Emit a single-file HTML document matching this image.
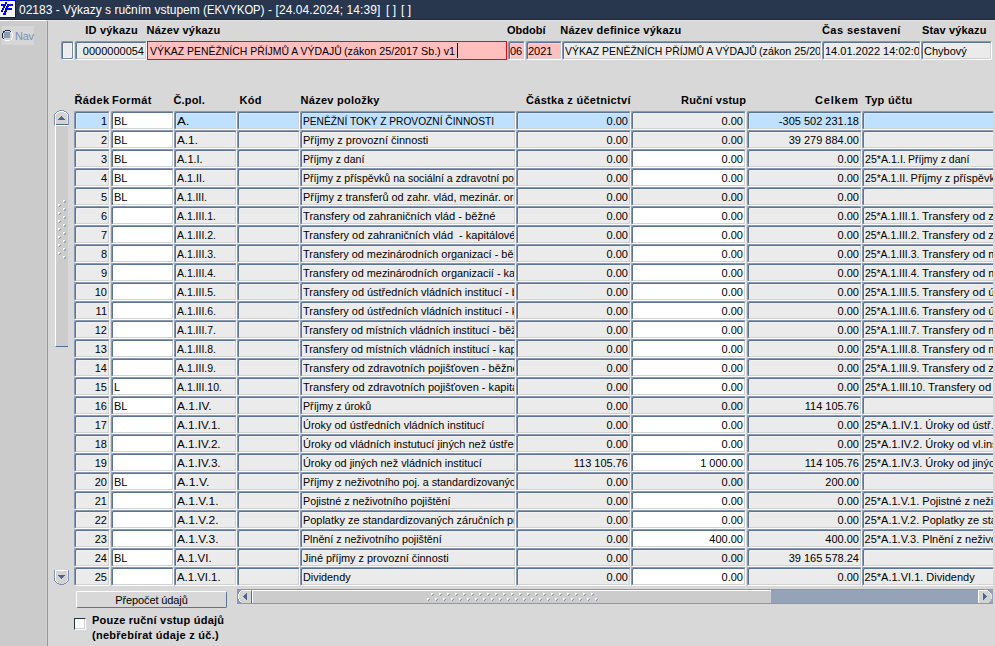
<!DOCTYPE html>
<html><head><meta charset="utf-8"><title>02183</title>
<style>
html,body{margin:0;padding:0}
body{width:995px;height:646px;overflow:hidden;position:relative;background:#d8d8d8;font-family:"Liberation Sans",sans-serif;font-size:11px;color:#000}
div,span{position:absolute;box-sizing:border-box;white-space:nowrap}
#tb{left:0;top:0;width:995px;height:20px;background:#29374e;border-bottom:1px solid #1e2a3c}
#tt,.tt{left:19px;top:3px;font-size:12px;line-height:14px;color:#fff;white-space:pre}
#ic{left:0;top:0;width:16px;height:18px;background:#fbfbf4;border:1px solid #0000ff;border-left:0}
#lp{left:0;top:20px;width:46px;height:626px;background:#cbcbcb;border-top:1px solid #fff}
#lv{left:46px;top:21px;width:2px;height:625px;background:#8597b4;border-left:1px solid #d2d2d2}
#hl{left:47px;top:20px;width:948px;height:1px;background:#e4e4e4}
#nv{left:2px;top:26px;width:32px;height:19px;background:#d6d6d6}
#nt{left:15px;top:30px;font-size:11px;line-height:13px;color:#7890b6;letter-spacing:-.3px}
.h{font-weight:bold;line-height:13px;top:24px}
.g{font-weight:bold;line-height:13px;top:94px}
.c{height:19px;border-top:1px solid #8798b4;border-left:1px solid #8798b4;border-bottom:1px solid #fff;border-right:1px solid #fff;border-radius:2px;background:#ebebeb;box-shadow:inset 1px 1px 0 #5a7396,inset -1px -1px 0 #d2d2d2,inset 2px 2px 0 rgba(255,255,255,.3);line-height:16px;padding:1px 2px 0 2px;overflow:hidden;white-space:pre}
.c span{top:1px;left:2px;line-height:16px;white-space:pre}
.k{transform-origin:0 0}
.c::after{content:"";position:absolute;right:0;top:1px;bottom:0;width:1px;background:#d2d2d2}
.r{text-align:right}
.w{background:#fff}
.b{background:#bfe0ff}
.p{background:#ffbfbf}
</style></head><body>
<div id="tb"></div>
<div id="tt">02183 - Výkazy s ručním vstupem (</div>
<div class="tt k" style="left:207px;transform:scaleX(.934)">EKVYKOP</div>
<div class="tt" style="left:260.5px;letter-spacing:.08px">) - [24.04.2024; 14:39]</div>
<div class="tt" style="left:386px">[ ]</div>
<div class="tt" style="left:401px">[ ]</div>
<div id="lp"></div><div id="lv"></div><div id="hl"></div>
<div id="nv"></div><div id="nt">Nav</div>
<span class="h" style="left:85.3px;letter-spacing:.2px">ID výkazu</span>
<span class="h" style="left:146.5px;letter-spacing:.2px">Název výkazu</span>
<span class="h" style="left:507px">Období</span>
<span class="h" style="left:560.3px;letter-spacing:.24px">Název definice výkazu</span>
<span class="h" style="left:822px;letter-spacing:.42px">Čas sestavení</span>
<span class="h" style="left:922px;letter-spacing:.15px">Stav výkazu</span>
<div style="left:61px;top:41px;width:13px;height:19px;border-radius:2px;background:#ebebeb;border-top:1px solid #8798b4;border-left:1px solid #8798b4;border-right:1px solid #fff;border-bottom:1px solid #fff;box-shadow:inset 1px 1px 0 #5a7396,inset -1px -1px 0 #7189ab,inset 2px 2px 0 rgba(255,255,255,.4),inset -2px -2px 0 rgba(255,255,255,.4)"></div>
<div class="c r" style="left:75px;top:41px;width:72px">0000000054</div>
<div id="rf" style="left:147px;top:41px;width:360px;height:19px;border:1px solid #f00;background:#ffbfbf;line-height:17px;"><span class="k" style="left:2px;top:1px;line-height:16px;transform:scaleX(.9475)">VÝKAZ PENĚŽNÍCH PŘÍJMŮ A VÝDAJŮ</span><span class="k" style="left:196px;top:1px;line-height:16px;transform:scaleX(.976)">(zákon 25/2017 Sb.) v1</span></div>
<div id="ct" style="left:457px;top:43px;width:1px;height:15px;background:#000"></div>
<div class="c p" style="left:508px;top:41px;width:17px;padding-left:1px">06</div>
<div class="c p" style="left:526px;top:41px;width:36px;padding-left:1px">2021</div>
<div class="c" style="left:562px;top:41px;width:260px"><span class="k" style="transform:scaleX(.9475)">VÝKAZ PENĚŽNÍCH PŘÍJMŮ A VÝDAJŮ</span><span class="k" style="left:196px;transform:scaleX(.976)">(zákon 25/2017 Sb.) v1</span></div>
<div class="c" style="left:822px;top:41px;width:99px">14.01.2022 14:02:01</div>
<div class="c" style="left:921px;top:41px;width:71px">Chybový</div>
<span class="g" style="left:74.5px;letter-spacing:.4px">Řádek</span>
<span class="g" style="left:112px;letter-spacing:.43px">Formát</span>
<span class="g" style="left:173.5px;letter-spacing:.17px">Č.pol.</span>
<span class="g" style="left:239.5px;letter-spacing:.33px">Kód</span>
<span class="g" style="left:300.6px;letter-spacing:.25px">Název položky</span>
<span class="g" style="left:526px;letter-spacing:.3px">Částka z účetnictví</span>
<span class="g" style="left:681px;letter-spacing:.2px">Ruční vstup</span>
<span class="g" style="left:815px;letter-spacing:.8px">Celkem</span>
<span class="g" style="left:865px;letter-spacing:.3px">Typ účtu</span>
<div id="tbl" style="left:0;top:0;width:993px;height:646px;overflow:hidden">
<div class="c r b" style="left:74px;top:111px;width:36px">1</div>
<div class="c w" style="left:111px;top:111px;width:63px">BL</div>
<div class="c b" style="left:174px;top:111px;width:63px"><span class="k" style="transform:scaleX(1.2)">A.</span></div>
<div class="c b" style="left:237px;top:111px;width:63px"></div>
<div class="c b" style="left:300px;top:111px;width:216px"><span class="k" style="transform:scaleX(0.928)">PENĚŽNÍ TOKY Z PROVOZNÍ ČINNOSTI</span></div>
<div class="c r b" style="left:516px;top:111px;width:115px">0.00</div>
<div class="c r" style="left:631px;top:111px;width:115px">0.00</div>
<div class="c r b" style="left:747px;top:111px;width:115px">-305 502 231.18</div>
<div class="c b" style="left:862px;top:111px;width:140px"></div>
<div class="c r" style="left:74px;top:130px;width:36px">2</div>
<div class="c w" style="left:111px;top:130px;width:63px">BL</div>
<div class="c" style="left:174px;top:130px;width:63px"><span class="k" style="transform:scaleX(1.07)">A.1.</span></div>
<div class="c" style="left:237px;top:130px;width:63px"></div>
<div class="c" style="left:300px;top:130px;width:216px"><span class="k">Příjmy z provozní činnosti</span></div>
<div class="c r" style="left:516px;top:130px;width:115px">0.00</div>
<div class="c r" style="left:631px;top:130px;width:115px">0.00</div>
<div class="c r" style="left:747px;top:130px;width:115px">39 279 884.00</div>
<div class="c" style="left:862px;top:130px;width:140px"></div>
<div class="c r" style="left:74px;top:149px;width:36px">3</div>
<div class="c w" style="left:111px;top:149px;width:63px">BL</div>
<div class="c" style="left:174px;top:149px;width:63px"><span class="k">A.1.I.</span></div>
<div class="c" style="left:237px;top:149px;width:63px"></div>
<div class="c" style="left:300px;top:149px;width:216px"><span class="k" style="transform:scaleX(0.955)">Příjmy z daní</span></div>
<div class="c r" style="left:516px;top:149px;width:115px">0.00</div>
<div class="c r w" style="left:631px;top:149px;width:115px">0.00</div>
<div class="c r" style="left:747px;top:149px;width:115px">0.00</div>
<div class="c" style="left:862px;top:149px;width:140px"><span class="k" style="transform:scaleX(0.967);left:1.60px">25*A.1.I. </span><span class="k" style="transform:scaleX(0.955);left:45.37px">Příjmy z daní</span></div>
<div class="c r" style="left:74px;top:168px;width:36px">4</div>
<div class="c w" style="left:111px;top:168px;width:63px">BL</div>
<div class="c" style="left:174px;top:168px;width:63px"><span class="k" style="transform:scaleX(0.974)">A.1.II.</span></div>
<div class="c" style="left:237px;top:168px;width:63px"></div>
<div class="c" style="left:300px;top:168px;width:216px"><span class="k" style="transform:scaleX(0.964)">Příjmy z příspěvků na sociální a zdravotní pojištění</span></div>
<div class="c r" style="left:516px;top:168px;width:115px">0.00</div>
<div class="c r w" style="left:631px;top:168px;width:115px">0.00</div>
<div class="c r" style="left:747px;top:168px;width:115px">0.00</div>
<div class="c" style="left:862px;top:168px;width:140px"><span class="k" style="transform:scaleX(0.951);left:1.60px">25*A.1.II. </span><span class="k" style="left:47.55px">Příjmy z příspěvků na sociální</span></div>
<div class="c r" style="left:74px;top:187px;width:36px">5</div>
<div class="c w" style="left:111px;top:187px;width:63px">BL</div>
<div class="c" style="left:174px;top:187px;width:63px"><span class="k" style="transform:scaleX(0.943)">A.1.III.</span></div>
<div class="c" style="left:237px;top:187px;width:63px"></div>
<div class="c" style="left:300px;top:187px;width:216px"><span class="k" style="transform:scaleX(0.992)">Příjmy z transferů od zahr. vlád, mezinár. organizací</span></div>
<div class="c r" style="left:516px;top:187px;width:115px">0.00</div>
<div class="c r" style="left:631px;top:187px;width:115px">0.00</div>
<div class="c r" style="left:747px;top:187px;width:115px">0.00</div>
<div class="c" style="left:862px;top:187px;width:140px"></div>
<div class="c r" style="left:74px;top:206px;width:36px">6</div>
<div class="c w" style="left:111px;top:206px;width:63px"></div>
<div class="c" style="left:174px;top:206px;width:63px"><span class="k" style="transform:scaleX(0.951)">A.1.III.1.</span></div>
<div class="c" style="left:237px;top:206px;width:63px"></div>
<div class="c" style="left:300px;top:206px;width:216px"><span class="k" style="transform:scaleX(1.014)">Transfery od zahraničních vlád - běžné</span></div>
<div class="c r" style="left:516px;top:206px;width:115px">0.00</div>
<div class="c r w" style="left:631px;top:206px;width:115px">0.00</div>
<div class="c r" style="left:747px;top:206px;width:115px">0.00</div>
<div class="c" style="left:862px;top:206px;width:140px"><span class="k" style="transform:scaleX(0.945);left:1.60px">25*A.1.III.1. </span><span class="k" style="transform:scaleX(1.03);left:58.82px">Transfery od zahr.</span></div>
<div class="c r" style="left:74px;top:225px;width:36px">7</div>
<div class="c w" style="left:111px;top:225px;width:63px"></div>
<div class="c" style="left:174px;top:225px;width:63px"><span class="k" style="transform:scaleX(0.951)">A.1.III.2.</span></div>
<div class="c" style="left:237px;top:225px;width:63px"></div>
<div class="c" style="left:300px;top:225px;width:216px"><span class="k">Transfery od zahraničních vlád  - kapitálové</span></div>
<div class="c r" style="left:516px;top:225px;width:115px">0.00</div>
<div class="c r w" style="left:631px;top:225px;width:115px">0.00</div>
<div class="c r" style="left:747px;top:225px;width:115px">0.00</div>
<div class="c" style="left:862px;top:225px;width:140px"><span class="k" style="transform:scaleX(0.945);left:1.60px">25*A.1.III.2. </span><span class="k" style="transform:scaleX(1.03);left:58.82px">Transfery od zahr.</span></div>
<div class="c r" style="left:74px;top:244px;width:36px">8</div>
<div class="c w" style="left:111px;top:244px;width:63px"></div>
<div class="c" style="left:174px;top:244px;width:63px"><span class="k" style="transform:scaleX(0.951)">A.1.III.3.</span></div>
<div class="c" style="left:237px;top:244px;width:63px"></div>
<div class="c" style="left:300px;top:244px;width:216px"><span class="k" style="transform:scaleX(0.991)">Transfery od mezinárodních organizací - běžné</span></div>
<div class="c r" style="left:516px;top:244px;width:115px">0.00</div>
<div class="c r w" style="left:631px;top:244px;width:115px">0.00</div>
<div class="c r" style="left:747px;top:244px;width:115px">0.00</div>
<div class="c" style="left:862px;top:244px;width:140px"><span class="k" style="transform:scaleX(0.945);left:1.60px">25*A.1.III.3. </span><span class="k" style="transform:scaleX(1.03);left:58.82px">Transfery od mez.</span></div>
<div class="c r" style="left:74px;top:263px;width:36px">9</div>
<div class="c w" style="left:111px;top:263px;width:63px"></div>
<div class="c" style="left:174px;top:263px;width:63px"><span class="k" style="transform:scaleX(0.951)">A.1.III.4.</span></div>
<div class="c" style="left:237px;top:263px;width:63px"></div>
<div class="c" style="left:300px;top:263px;width:216px"><span class="k" style="transform:scaleX(0.99)">Transfery od mezinárodních organizacií - kapitálové</span></div>
<div class="c r" style="left:516px;top:263px;width:115px">0.00</div>
<div class="c r w" style="left:631px;top:263px;width:115px">0.00</div>
<div class="c r" style="left:747px;top:263px;width:115px">0.00</div>
<div class="c" style="left:862px;top:263px;width:140px"><span class="k" style="transform:scaleX(0.945);left:1.60px">25*A.1.III.4. </span><span class="k" style="transform:scaleX(1.03);left:58.82px">Transfery od mez.</span></div>
<div class="c r" style="left:74px;top:282px;width:36px">10</div>
<div class="c w" style="left:111px;top:282px;width:63px"></div>
<div class="c" style="left:174px;top:282px;width:63px"><span class="k" style="transform:scaleX(0.951)">A.1.III.5.</span></div>
<div class="c" style="left:237px;top:282px;width:63px"></div>
<div class="c" style="left:300px;top:282px;width:216px"><span class="k" style="transform:scaleX(0.994)">Transfery od ústředních vládních institucí - běžné</span></div>
<div class="c r" style="left:516px;top:282px;width:115px">0.00</div>
<div class="c r w" style="left:631px;top:282px;width:115px">0.00</div>
<div class="c r" style="left:747px;top:282px;width:115px">0.00</div>
<div class="c" style="left:862px;top:282px;width:140px"><span class="k" style="transform:scaleX(0.945);left:1.60px">25*A.1.III.5. </span><span class="k" style="transform:scaleX(1.03);left:58.82px">Transfery od ústř.</span></div>
<div class="c r" style="left:74px;top:301px;width:36px">11</div>
<div class="c w" style="left:111px;top:301px;width:63px"></div>
<div class="c" style="left:174px;top:301px;width:63px"><span class="k" style="transform:scaleX(0.951)">A.1.III.6.</span></div>
<div class="c" style="left:237px;top:301px;width:63px"></div>
<div class="c" style="left:300px;top:301px;width:216px"><span class="k" style="transform:scaleX(0.994)">Transfery od ústředních vládních institucí - kapitálové</span></div>
<div class="c r" style="left:516px;top:301px;width:115px">0.00</div>
<div class="c r w" style="left:631px;top:301px;width:115px">0.00</div>
<div class="c r" style="left:747px;top:301px;width:115px">0.00</div>
<div class="c" style="left:862px;top:301px;width:140px"><span class="k" style="transform:scaleX(0.945);left:1.60px">25*A.1.III.6. </span><span class="k" style="transform:scaleX(1.03);left:58.82px">Transfery od ústř.</span></div>
<div class="c r" style="left:74px;top:320px;width:36px">12</div>
<div class="c w" style="left:111px;top:320px;width:63px"></div>
<div class="c" style="left:174px;top:320px;width:63px"><span class="k" style="transform:scaleX(0.951)">A.1.III.7.</span></div>
<div class="c" style="left:237px;top:320px;width:63px"></div>
<div class="c" style="left:300px;top:320px;width:216px"><span class="k" style="transform:scaleX(0.98)">Transfery od místních vládních institucí - běžné</span></div>
<div class="c r" style="left:516px;top:320px;width:115px">0.00</div>
<div class="c r w" style="left:631px;top:320px;width:115px">0.00</div>
<div class="c r" style="left:747px;top:320px;width:115px">0.00</div>
<div class="c" style="left:862px;top:320px;width:140px"><span class="k" style="transform:scaleX(0.945);left:1.60px">25*A.1.III.7. </span><span class="k" style="transform:scaleX(1.03);left:58.82px">Transfery od míst.</span></div>
<div class="c r" style="left:74px;top:339px;width:36px">13</div>
<div class="c w" style="left:111px;top:339px;width:63px"></div>
<div class="c" style="left:174px;top:339px;width:63px"><span class="k" style="transform:scaleX(0.951)">A.1.III.8.</span></div>
<div class="c" style="left:237px;top:339px;width:63px"></div>
<div class="c" style="left:300px;top:339px;width:216px"><span class="k" style="transform:scaleX(0.98)">Transfery od místních vládních institucí - kapitálové</span></div>
<div class="c r" style="left:516px;top:339px;width:115px">0.00</div>
<div class="c r w" style="left:631px;top:339px;width:115px">0.00</div>
<div class="c r" style="left:747px;top:339px;width:115px">0.00</div>
<div class="c" style="left:862px;top:339px;width:140px"><span class="k" style="transform:scaleX(0.945);left:1.60px">25*A.1.III.8. </span><span class="k" style="transform:scaleX(1.03);left:58.82px">Transfery od míst.</span></div>
<div class="c r" style="left:74px;top:358px;width:36px">14</div>
<div class="c w" style="left:111px;top:358px;width:63px"></div>
<div class="c" style="left:174px;top:358px;width:63px"><span class="k" style="transform:scaleX(0.951)">A.1.III.9.</span></div>
<div class="c" style="left:237px;top:358px;width:63px"></div>
<div class="c" style="left:300px;top:358px;width:216px"><span class="k" style="transform:scaleX(1.005)">Transfery od zdravotních pojišťoven - běžné</span></div>
<div class="c r" style="left:516px;top:358px;width:115px">0.00</div>
<div class="c r w" style="left:631px;top:358px;width:115px">0.00</div>
<div class="c r" style="left:747px;top:358px;width:115px">0.00</div>
<div class="c" style="left:862px;top:358px;width:140px"><span class="k" style="transform:scaleX(0.945);left:1.60px">25*A.1.III.9. </span><span class="k" style="transform:scaleX(1.03);left:58.82px">Transfery od zdr.</span></div>
<div class="c r" style="left:74px;top:377px;width:36px">15</div>
<div class="c w" style="left:111px;top:377px;width:63px">L</div>
<div class="c" style="left:174px;top:377px;width:63px"><span class="k" style="transform:scaleX(0.953)">A.1.III.10.</span></div>
<div class="c" style="left:237px;top:377px;width:63px"></div>
<div class="c" style="left:300px;top:377px;width:216px"><span class="k" style="transform:scaleX(1.005)">Transfery od zdravotních pojišťoven - kapitálové</span></div>
<div class="c r" style="left:516px;top:377px;width:115px">0.00</div>
<div class="c r w" style="left:631px;top:377px;width:115px">0.00</div>
<div class="c r" style="left:747px;top:377px;width:115px">0.00</div>
<div class="c" style="left:862px;top:377px;width:140px"><span class="k" style="transform:scaleX(0.948);left:1.60px">25*A.1.III.10. </span><span class="k" style="transform:scaleX(1.03);left:64.79px">Transfery od zdr.</span></div>
<div class="c r" style="left:74px;top:396px;width:36px">16</div>
<div class="c w" style="left:111px;top:396px;width:63px">BL</div>
<div class="c" style="left:174px;top:396px;width:63px"><span class="k" style="transform:scaleX(1.083)">A.1.IV.</span></div>
<div class="c" style="left:237px;top:396px;width:63px"></div>
<div class="c" style="left:300px;top:396px;width:216px"><span class="k" style="transform:scaleX(0.969)">Příjmy z úroků</span></div>
<div class="c r" style="left:516px;top:396px;width:115px">0.00</div>
<div class="c r" style="left:631px;top:396px;width:115px">0.00</div>
<div class="c r" style="left:747px;top:396px;width:115px">114 105.76</div>
<div class="c" style="left:862px;top:396px;width:140px"></div>
<div class="c r" style="left:74px;top:415px;width:36px">17</div>
<div class="c w" style="left:111px;top:415px;width:63px"></div>
<div class="c" style="left:174px;top:415px;width:63px"><span class="k" style="transform:scaleX(1.059)">A.1.IV.1.</span></div>
<div class="c" style="left:237px;top:415px;width:63px"></div>
<div class="c" style="left:300px;top:415px;width:216px"><span class="k" style="transform:scaleX(0.992)">Úroky od ústředních vládních institucí</span></div>
<div class="c r" style="left:516px;top:415px;width:115px">0.00</div>
<div class="c r w" style="left:631px;top:415px;width:115px">0.00</div>
<div class="c r" style="left:747px;top:415px;width:115px">0.00</div>
<div class="c" style="left:862px;top:415px;width:140px"><span class="k" style="left:1.60px">25*A.1.IV.1. </span><span class="k" style="left:62.37px">Úroky od ústř.vl.</span></div>
<div class="c r" style="left:74px;top:434px;width:36px">18</div>
<div class="c w" style="left:111px;top:434px;width:63px"></div>
<div class="c" style="left:174px;top:434px;width:63px"><span class="k" style="transform:scaleX(1.059)">A.1.IV.2.</span></div>
<div class="c" style="left:237px;top:434px;width:63px"></div>
<div class="c" style="left:300px;top:434px;width:216px"><span class="k" style="transform:scaleX(0.995)">Úroky od vládních instutucí jiných než ústředních</span></div>
<div class="c r" style="left:516px;top:434px;width:115px">0.00</div>
<div class="c r w" style="left:631px;top:434px;width:115px">0.00</div>
<div class="c r" style="left:747px;top:434px;width:115px">0.00</div>
<div class="c" style="left:862px;top:434px;width:140px"><span class="k" style="left:1.60px">25*A.1.IV.2. </span><span class="k" style="left:62.37px">Úroky od vl.inst.</span></div>
<div class="c r" style="left:74px;top:453px;width:36px">19</div>
<div class="c w" style="left:111px;top:453px;width:63px"></div>
<div class="c" style="left:174px;top:453px;width:63px"><span class="k" style="transform:scaleX(1.059)">A.1.IV.3.</span></div>
<div class="c" style="left:237px;top:453px;width:63px"></div>
<div class="c" style="left:300px;top:453px;width:216px"><span class="k" style="transform:scaleX(0.991)">Úroky od jiných než vládních institucí</span></div>
<div class="c r" style="left:516px;top:453px;width:115px">113 105.76</div>
<div class="c r w" style="left:631px;top:453px;width:115px">1 000.00</div>
<div class="c r" style="left:747px;top:453px;width:115px">114 105.76</div>
<div class="c" style="left:862px;top:453px;width:140px"><span class="k" style="left:1.60px">25*A.1.IV.3. </span><span class="k" style="left:62.37px">Úroky od jiných</span></div>
<div class="c r" style="left:74px;top:472px;width:36px">20</div>
<div class="c w" style="left:111px;top:472px;width:63px">BL</div>
<div class="c" style="left:174px;top:472px;width:63px"><span class="k" style="transform:scaleX(1.119)">A.1.V.</span></div>
<div class="c" style="left:237px;top:472px;width:63px"></div>
<div class="c" style="left:300px;top:472px;width:216px"><span class="k" style="transform:scaleX(0.975)">Příjmy z neživotního poj. a standardizovaných</span></div>
<div class="c r" style="left:516px;top:472px;width:115px">0.00</div>
<div class="c r" style="left:631px;top:472px;width:115px">0.00</div>
<div class="c r" style="left:747px;top:472px;width:115px">200.00</div>
<div class="c" style="left:862px;top:472px;width:140px"></div>
<div class="c r" style="left:74px;top:491px;width:36px">21</div>
<div class="c w" style="left:111px;top:491px;width:63px"></div>
<div class="c" style="left:174px;top:491px;width:63px"><span class="k" style="transform:scaleX(1.089)">A.1.V.1.</span></div>
<div class="c" style="left:237px;top:491px;width:63px"></div>
<div class="c" style="left:300px;top:491px;width:216px"><span class="k" style="transform:scaleX(0.976)">Pojistné z neživotního pojištění</span></div>
<div class="c r" style="left:516px;top:491px;width:115px">0.00</div>
<div class="c r w" style="left:631px;top:491px;width:115px">0.00</div>
<div class="c r" style="left:747px;top:491px;width:115px">0.00</div>
<div class="c" style="left:862px;top:491px;width:140px"><span class="k" style="left:1.60px">25*A.1.V.1. </span><span class="k" style="left:59.30px">Pojistné z neživotního</span></div>
<div class="c r" style="left:74px;top:510px;width:36px">22</div>
<div class="c w" style="left:111px;top:510px;width:63px"></div>
<div class="c" style="left:174px;top:510px;width:63px"><span class="k" style="transform:scaleX(1.089)">A.1.V.2.</span></div>
<div class="c" style="left:237px;top:510px;width:63px"></div>
<div class="c" style="left:300px;top:510px;width:216px"><span class="k" style="transform:scaleX(0.993)">Poplatky ze standardizovaných záručních programů</span></div>
<div class="c r" style="left:516px;top:510px;width:115px">0.00</div>
<div class="c r w" style="left:631px;top:510px;width:115px">0.00</div>
<div class="c r" style="left:747px;top:510px;width:115px">0.00</div>
<div class="c" style="left:862px;top:510px;width:140px"><span class="k" style="left:1.60px">25*A.1.V.2. </span><span class="k" style="left:59.30px">Poplatky ze stand.</span></div>
<div class="c r" style="left:74px;top:529px;width:36px">23</div>
<div class="c w" style="left:111px;top:529px;width:63px"></div>
<div class="c" style="left:174px;top:529px;width:63px"><span class="k" style="transform:scaleX(1.089)">A.1.V.3.</span></div>
<div class="c" style="left:237px;top:529px;width:63px"></div>
<div class="c" style="left:300px;top:529px;width:216px"><span class="k" style="transform:scaleX(0.969)">Plnění z neživotního pojištění</span></div>
<div class="c r" style="left:516px;top:529px;width:115px">0.00</div>
<div class="c r w" style="left:631px;top:529px;width:115px">400.00</div>
<div class="c r" style="left:747px;top:529px;width:115px">400.00</div>
<div class="c" style="left:862px;top:529px;width:140px"><span class="k" style="left:1.60px">25*A.1.V.3. </span><span class="k" style="left:59.30px">Plnění z neživotního</span></div>
<div class="c r" style="left:74px;top:548px;width:36px">24</div>
<div class="c w" style="left:111px;top:548px;width:63px">BL</div>
<div class="c" style="left:174px;top:548px;width:63px"><span class="k" style="transform:scaleX(1.048)">A.1.VI.</span></div>
<div class="c" style="left:237px;top:548px;width:63px"></div>
<div class="c" style="left:300px;top:548px;width:216px"><span class="k" style="transform:scaleX(0.988)">Jiné příjmy z provozní činnosti</span></div>
<div class="c r" style="left:516px;top:548px;width:115px">0.00</div>
<div class="c r" style="left:631px;top:548px;width:115px">0.00</div>
<div class="c r" style="left:747px;top:548px;width:115px">39 165 578.24</div>
<div class="c" style="left:862px;top:548px;width:140px"></div>
<div class="c r" style="left:74px;top:567px;width:36px">25</div>
<div class="c w" style="left:111px;top:567px;width:63px"></div>
<div class="c" style="left:174px;top:567px;width:63px"><span class="k" style="transform:scaleX(1.033)">A.1.VI.1.</span></div>
<div class="c" style="left:237px;top:567px;width:63px"></div>
<div class="c" style="left:300px;top:567px;width:216px"><span class="k" style="transform:scaleX(0.985)">Dividendy</span></div>
<div class="c r" style="left:516px;top:567px;width:115px">0.00</div>
<div class="c r w" style="left:631px;top:567px;width:115px">0.00</div>
<div class="c r" style="left:747px;top:567px;width:115px">0.00</div>
<div class="c" style="left:862px;top:567px;width:140px"><span class="k" style="left:1.60px">25*A.1.VI.1. </span><span class="k" style="left:63.37px">Dividendy</span></div><svg style="position:absolute;left:54px;top:110px" width="15" height="15" shape-rendering="crispEdges"><rect x="5" y="0" width="5" height="1" fill="#7d92b4"/><rect x="3" y="1" width="2" height="1" fill="#7d92b4"/><rect x="5" y="1" width="5" height="1" fill="#ffffff"/><rect x="10" y="1" width="2" height="1" fill="#7d92b4"/><rect x="2" y="2" width="1" height="1" fill="#7d92b4"/><rect x="3" y="2" width="2" height="1" fill="#ffffff"/><rect x="5" y="2" width="5" height="1" fill="#d3d3d3"/><rect x="10" y="2" width="2" height="1" fill="#ffffff"/><rect x="12" y="2" width="1" height="1" fill="#7d92b4"/><rect x="1" y="3" width="1" height="1" fill="#7d92b4"/><rect x="2" y="3" width="1" height="1" fill="#ffffff"/><rect x="3" y="3" width="9" height="1" fill="#d3d3d3"/><rect x="12" y="3" width="1" height="1" fill="#ffffff"/><rect x="13" y="3" width="1" height="1" fill="#7d92b4"/><rect x="0" y="4" width="1" height="1" fill="#7d92b4"/><rect x="1" y="4" width="1" height="1" fill="#ffffff"/><rect x="2" y="4" width="11" height="1" fill="#d3d3d3"/><rect x="13" y="4" width="1" height="1" fill="#ffffff"/><rect x="14" y="4" width="1" height="1" fill="#7d92b4"/><rect x="0" y="5" width="1" height="1" fill="#7d92b4"/><rect x="1" y="5" width="1" height="1" fill="#ffffff"/><rect x="2" y="5" width="11" height="1" fill="#d3d3d3"/><rect x="13" y="5" width="1" height="1" fill="#e6e6e6"/><rect x="14" y="5" width="1" height="1" fill="#7d92b4"/><rect x="0" y="6" width="1" height="1" fill="#7d92b4"/><rect x="1" y="6" width="1" height="1" fill="#ffffff"/><rect x="2" y="6" width="5" height="1" fill="#d3d3d3"/><rect x="7" y="6" width="1" height="1" fill="#4a6590"/><rect x="8" y="6" width="5" height="1" fill="#d3d3d3"/><rect x="13" y="6" width="1" height="1" fill="#e6e6e6"/><rect x="14" y="6" width="1" height="1" fill="#7d92b4"/><rect x="0" y="7" width="1" height="1" fill="#7d92b4"/><rect x="1" y="7" width="1" height="1" fill="#ffffff"/><rect x="2" y="7" width="4" height="1" fill="#d3d3d3"/><rect x="6" y="7" width="3" height="1" fill="#4a6590"/><rect x="9" y="7" width="4" height="1" fill="#d3d3d3"/><rect x="13" y="7" width="1" height="1" fill="#e6e6e6"/><rect x="14" y="7" width="1" height="1" fill="#7d92b4"/><rect x="0" y="8" width="1" height="1" fill="#7d92b4"/><rect x="1" y="8" width="1" height="1" fill="#ffffff"/><rect x="2" y="8" width="3" height="1" fill="#d3d3d3"/><rect x="5" y="8" width="5" height="1" fill="#4a6590"/><rect x="10" y="8" width="3" height="1" fill="#d3d3d3"/><rect x="13" y="8" width="1" height="1" fill="#e6e6e6"/><rect x="14" y="8" width="1" height="1" fill="#7d92b4"/><rect x="0" y="9" width="1" height="1" fill="#7d92b4"/><rect x="1" y="9" width="1" height="1" fill="#ffffff"/><rect x="2" y="9" width="2" height="1" fill="#d3d3d3"/><rect x="4" y="9" width="7" height="1" fill="#4a6590"/><rect x="11" y="9" width="2" height="1" fill="#d3d3d3"/><rect x="13" y="9" width="1" height="1" fill="#e6e6e6"/><rect x="14" y="9" width="1" height="1" fill="#7d92b4"/><rect x="0" y="10" width="1" height="1" fill="#7d92b4"/><rect x="1" y="10" width="1" height="1" fill="#ffffff"/><rect x="2" y="10" width="11" height="1" fill="#d3d3d3"/><rect x="13" y="10" width="1" height="1" fill="#e6e6e6"/><rect x="14" y="10" width="1" height="1" fill="#7d92b4"/><rect x="0" y="11" width="1" height="1" fill="#7d92b4"/><rect x="1" y="11" width="1" height="1" fill="#ffffff"/><rect x="2" y="11" width="11" height="1" fill="#d3d3d3"/><rect x="13" y="11" width="1" height="1" fill="#e6e6e6"/><rect x="14" y="11" width="1" height="1" fill="#7d92b4"/><rect x="0" y="12" width="1" height="1" fill="#7d92b4"/><rect x="1" y="12" width="1" height="1" fill="#ffffff"/><rect x="2" y="12" width="11" height="1" fill="#d3d3d3"/><rect x="13" y="12" width="1" height="1" fill="#e6e6e6"/><rect x="14" y="12" width="1" height="1" fill="#7d92b4"/><rect x="0" y="13" width="1" height="1" fill="#7d92b4"/><rect x="1" y="13" width="1" height="1" fill="#ffffff"/><rect x="2" y="13" width="11" height="1" fill="#d3d3d3"/><rect x="13" y="13" width="1" height="1" fill="#e6e6e6"/><rect x="14" y="13" width="1" height="1" fill="#7d92b4"/><rect x="0" y="14" width="1" height="1" fill="#7d92b4"/><rect x="1" y="14" width="1" height="1" fill="#ffffff"/><rect x="2" y="14" width="12" height="1" fill="#4f6b94"/><rect x="14" y="14" width="1" height="1" fill="#7d92b4"/></svg>
<div style="left:55px;top:125px;width:13px;height:222px;background:#cccccc;border-left:1px solid #fff;border-top:1px solid #fff;border-bottom:1px solid #4f6b94"></div>
<svg style="position:absolute;left:0;top:0" width="80" height="400" shape-rendering="crispEdges"><rect x="63" y="200" width="2" height="2" fill="#fff"/><rect x="64" y="201" width="1" height="1" fill="#b9c4d6"/><rect x="65" y="201" width="1" height="1" fill="#7f95b6"/><rect x="64" y="202" width="1" height="1" fill="#7f95b6"/><rect x="63" y="208" width="2" height="2" fill="#fff"/><rect x="64" y="209" width="1" height="1" fill="#b9c4d6"/><rect x="65" y="209" width="1" height="1" fill="#7f95b6"/><rect x="64" y="210" width="1" height="1" fill="#7f95b6"/><rect x="63" y="216" width="2" height="2" fill="#fff"/><rect x="64" y="217" width="1" height="1" fill="#b9c4d6"/><rect x="65" y="217" width="1" height="1" fill="#7f95b6"/><rect x="64" y="218" width="1" height="1" fill="#7f95b6"/><rect x="63" y="224" width="2" height="2" fill="#fff"/><rect x="64" y="225" width="1" height="1" fill="#b9c4d6"/><rect x="65" y="225" width="1" height="1" fill="#7f95b6"/><rect x="64" y="226" width="1" height="1" fill="#7f95b6"/><rect x="63" y="232" width="2" height="2" fill="#fff"/><rect x="64" y="233" width="1" height="1" fill="#b9c4d6"/><rect x="65" y="233" width="1" height="1" fill="#7f95b6"/><rect x="64" y="234" width="1" height="1" fill="#7f95b6"/><rect x="63" y="240" width="2" height="2" fill="#fff"/><rect x="64" y="241" width="1" height="1" fill="#b9c4d6"/><rect x="65" y="241" width="1" height="1" fill="#7f95b6"/><rect x="64" y="242" width="1" height="1" fill="#7f95b6"/><rect x="63" y="248" width="2" height="2" fill="#fff"/><rect x="64" y="249" width="1" height="1" fill="#b9c4d6"/><rect x="65" y="249" width="1" height="1" fill="#7f95b6"/><rect x="64" y="250" width="1" height="1" fill="#7f95b6"/><rect x="63" y="256" width="2" height="2" fill="#fff"/><rect x="64" y="257" width="1" height="1" fill="#b9c4d6"/><rect x="65" y="257" width="1" height="1" fill="#7f95b6"/><rect x="64" y="258" width="1" height="1" fill="#7f95b6"/><rect x="58" y="204" width="2" height="2" fill="#fff"/><rect x="59" y="205" width="1" height="1" fill="#b9c4d6"/><rect x="60" y="205" width="1" height="1" fill="#7f95b6"/><rect x="59" y="206" width="1" height="1" fill="#7f95b6"/><rect x="58" y="212" width="2" height="2" fill="#fff"/><rect x="59" y="213" width="1" height="1" fill="#b9c4d6"/><rect x="60" y="213" width="1" height="1" fill="#7f95b6"/><rect x="59" y="214" width="1" height="1" fill="#7f95b6"/><rect x="58" y="220" width="2" height="2" fill="#fff"/><rect x="59" y="221" width="1" height="1" fill="#b9c4d6"/><rect x="60" y="221" width="1" height="1" fill="#7f95b6"/><rect x="59" y="222" width="1" height="1" fill="#7f95b6"/><rect x="58" y="228" width="2" height="2" fill="#fff"/><rect x="59" y="229" width="1" height="1" fill="#b9c4d6"/><rect x="60" y="229" width="1" height="1" fill="#7f95b6"/><rect x="59" y="230" width="1" height="1" fill="#7f95b6"/><rect x="58" y="236" width="2" height="2" fill="#fff"/><rect x="59" y="237" width="1" height="1" fill="#b9c4d6"/><rect x="60" y="237" width="1" height="1" fill="#7f95b6"/><rect x="59" y="238" width="1" height="1" fill="#7f95b6"/><rect x="58" y="244" width="2" height="2" fill="#fff"/><rect x="59" y="245" width="1" height="1" fill="#b9c4d6"/><rect x="60" y="245" width="1" height="1" fill="#7f95b6"/><rect x="59" y="246" width="1" height="1" fill="#7f95b6"/><rect x="58" y="252" width="2" height="2" fill="#fff"/><rect x="59" y="253" width="1" height="1" fill="#b9c4d6"/><rect x="60" y="253" width="1" height="1" fill="#7f95b6"/><rect x="59" y="254" width="1" height="1" fill="#7f95b6"/></svg>
<svg style="position:absolute;left:54px;top:570px" width="15" height="15" shape-rendering="crispEdges"><rect x="0" y="0" width="1" height="1" fill="#7d92b4"/><rect x="1" y="0" width="13" height="1" fill="#ffffff"/><rect x="14" y="0" width="1" height="1" fill="#7d92b4"/><rect x="0" y="1" width="1" height="1" fill="#7d92b4"/><rect x="1" y="1" width="1" height="1" fill="#ffffff"/><rect x="2" y="1" width="11" height="1" fill="#d3d3d3"/><rect x="13" y="1" width="1" height="1" fill="#e6e6e6"/><rect x="14" y="1" width="1" height="1" fill="#7d92b4"/><rect x="0" y="2" width="1" height="1" fill="#7d92b4"/><rect x="1" y="2" width="1" height="1" fill="#ffffff"/><rect x="2" y="2" width="11" height="1" fill="#d3d3d3"/><rect x="13" y="2" width="1" height="1" fill="#e6e6e6"/><rect x="14" y="2" width="1" height="1" fill="#7d92b4"/><rect x="0" y="3" width="1" height="1" fill="#7d92b4"/><rect x="1" y="3" width="1" height="1" fill="#ffffff"/><rect x="2" y="3" width="11" height="1" fill="#d3d3d3"/><rect x="13" y="3" width="1" height="1" fill="#e6e6e6"/><rect x="14" y="3" width="1" height="1" fill="#7d92b4"/><rect x="0" y="4" width="1" height="1" fill="#7d92b4"/><rect x="1" y="4" width="1" height="1" fill="#ffffff"/><rect x="2" y="4" width="11" height="1" fill="#d3d3d3"/><rect x="13" y="4" width="1" height="1" fill="#e6e6e6"/><rect x="14" y="4" width="1" height="1" fill="#7d92b4"/><rect x="0" y="5" width="1" height="1" fill="#7d92b4"/><rect x="1" y="5" width="1" height="1" fill="#ffffff"/><rect x="2" y="5" width="2" height="1" fill="#d3d3d3"/><rect x="4" y="5" width="7" height="1" fill="#4a6590"/><rect x="11" y="5" width="2" height="1" fill="#d3d3d3"/><rect x="13" y="5" width="1" height="1" fill="#e6e6e6"/><rect x="14" y="5" width="1" height="1" fill="#7d92b4"/><rect x="0" y="6" width="1" height="1" fill="#7d92b4"/><rect x="1" y="6" width="1" height="1" fill="#ffffff"/><rect x="2" y="6" width="3" height="1" fill="#d3d3d3"/><rect x="5" y="6" width="5" height="1" fill="#4a6590"/><rect x="10" y="6" width="3" height="1" fill="#d3d3d3"/><rect x="13" y="6" width="1" height="1" fill="#e6e6e6"/><rect x="14" y="6" width="1" height="1" fill="#7d92b4"/><rect x="0" y="7" width="1" height="1" fill="#7d92b4"/><rect x="1" y="7" width="1" height="1" fill="#ffffff"/><rect x="2" y="7" width="4" height="1" fill="#d3d3d3"/><rect x="6" y="7" width="3" height="1" fill="#4a6590"/><rect x="9" y="7" width="4" height="1" fill="#d3d3d3"/><rect x="13" y="7" width="1" height="1" fill="#e6e6e6"/><rect x="14" y="7" width="1" height="1" fill="#7d92b4"/><rect x="0" y="8" width="1" height="1" fill="#7d92b4"/><rect x="1" y="8" width="1" height="1" fill="#ffffff"/><rect x="2" y="8" width="5" height="1" fill="#d3d3d3"/><rect x="7" y="8" width="1" height="1" fill="#4a6590"/><rect x="8" y="8" width="5" height="1" fill="#d3d3d3"/><rect x="13" y="8" width="1" height="1" fill="#e6e6e6"/><rect x="14" y="8" width="1" height="1" fill="#7d92b4"/><rect x="0" y="9" width="1" height="1" fill="#7d92b4"/><rect x="1" y="9" width="1" height="1" fill="#ffffff"/><rect x="2" y="9" width="11" height="1" fill="#d3d3d3"/><rect x="13" y="9" width="1" height="1" fill="#e6e6e6"/><rect x="14" y="9" width="1" height="1" fill="#7d92b4"/><rect x="0" y="10" width="1" height="1" fill="#7d92b4"/><rect x="1" y="10" width="1" height="1" fill="#ffffff"/><rect x="2" y="10" width="11" height="1" fill="#d3d3d3"/><rect x="13" y="10" width="1" height="1" fill="#e6e6e6"/><rect x="14" y="10" width="1" height="1" fill="#7d92b4"/><rect x="1" y="11" width="1" height="1" fill="#7d92b4"/><rect x="2" y="11" width="1" height="1" fill="#ffffff"/><rect x="3" y="11" width="9" height="1" fill="#d3d3d3"/><rect x="12" y="11" width="1" height="1" fill="#e6e6e6"/><rect x="13" y="11" width="1" height="1" fill="#7d92b4"/><rect x="2" y="12" width="1" height="1" fill="#7d92b4"/><rect x="3" y="12" width="1" height="1" fill="#ffffff"/><rect x="4" y="12" width="7" height="1" fill="#d3d3d3"/><rect x="11" y="12" width="1" height="1" fill="#e6e6e6"/><rect x="12" y="12" width="1" height="1" fill="#7d92b4"/><rect x="3" y="13" width="2" height="1" fill="#7d92b4"/><rect x="5" y="13" width="5" height="1" fill="#d3d3d3"/><rect x="10" y="13" width="2" height="1" fill="#7d92b4"/><rect x="5" y="14" width="5" height="1" fill="#7d92b4"/></svg>
<div style="left:237px;top:589px;width:756px;height:15px;background:#94a3b8;border-top:1px solid #8399b9;border-bottom:1px solid #8399b9"></div>
<svg style="position:absolute;left:237px;top:589px" width="15" height="15" shape-rendering="crispEdges"><rect x="0" y="0" width="15" height="1" fill="#8399b9"/><rect x="0" y="1" width="4" height="1" fill="#8399b9"/><rect x="4" y="1" width="10" height="1" fill="#ffffff"/><rect x="14" y="1" width="1" height="1" fill="#8399b9"/><rect x="0" y="2" width="3" height="1" fill="#8399b9"/><rect x="3" y="2" width="1" height="1" fill="#ffffff"/><rect x="4" y="2" width="10" height="1" fill="#d3d3d3"/><rect x="14" y="2" width="1" height="1" fill="#4f6b94"/><rect x="0" y="3" width="2" height="1" fill="#8399b9"/><rect x="2" y="3" width="1" height="1" fill="#ffffff"/><rect x="3" y="3" width="11" height="1" fill="#d3d3d3"/><rect x="14" y="3" width="1" height="1" fill="#4f6b94"/><rect x="0" y="4" width="2" height="1" fill="#8399b9"/><rect x="2" y="4" width="1" height="1" fill="#ffffff"/><rect x="3" y="4" width="6" height="1" fill="#d3d3d3"/><rect x="9" y="4" width="1" height="1" fill="#4a6590"/><rect x="10" y="4" width="4" height="1" fill="#d3d3d3"/><rect x="14" y="4" width="1" height="1" fill="#4f6b94"/><rect x="0" y="5" width="1" height="1" fill="#8399b9"/><rect x="1" y="5" width="1" height="1" fill="#ffffff"/><rect x="2" y="5" width="6" height="1" fill="#d3d3d3"/><rect x="8" y="5" width="2" height="1" fill="#4a6590"/><rect x="10" y="5" width="4" height="1" fill="#d3d3d3"/><rect x="14" y="5" width="1" height="1" fill="#4f6b94"/><rect x="0" y="6" width="1" height="1" fill="#8399b9"/><rect x="1" y="6" width="1" height="1" fill="#ffffff"/><rect x="2" y="6" width="5" height="1" fill="#d3d3d3"/><rect x="7" y="6" width="3" height="1" fill="#4a6590"/><rect x="10" y="6" width="4" height="1" fill="#d3d3d3"/><rect x="14" y="6" width="1" height="1" fill="#4f6b94"/><rect x="0" y="7" width="1" height="1" fill="#8399b9"/><rect x="1" y="7" width="1" height="1" fill="#ffffff"/><rect x="2" y="7" width="4" height="1" fill="#d3d3d3"/><rect x="6" y="7" width="4" height="1" fill="#4a6590"/><rect x="10" y="7" width="4" height="1" fill="#d3d3d3"/><rect x="14" y="7" width="1" height="1" fill="#4f6b94"/><rect x="0" y="8" width="1" height="1" fill="#8399b9"/><rect x="1" y="8" width="1" height="1" fill="#ffffff"/><rect x="2" y="8" width="5" height="1" fill="#d3d3d3"/><rect x="7" y="8" width="3" height="1" fill="#4a6590"/><rect x="10" y="8" width="4" height="1" fill="#d3d3d3"/><rect x="14" y="8" width="1" height="1" fill="#4f6b94"/><rect x="0" y="9" width="1" height="1" fill="#8399b9"/><rect x="1" y="9" width="1" height="1" fill="#ffffff"/><rect x="2" y="9" width="6" height="1" fill="#d3d3d3"/><rect x="8" y="9" width="2" height="1" fill="#4a6590"/><rect x="10" y="9" width="4" height="1" fill="#d3d3d3"/><rect x="14" y="9" width="1" height="1" fill="#4f6b94"/><rect x="0" y="10" width="2" height="1" fill="#8399b9"/><rect x="2" y="10" width="1" height="1" fill="#ffffff"/><rect x="3" y="10" width="6" height="1" fill="#d3d3d3"/><rect x="9" y="10" width="1" height="1" fill="#4a6590"/><rect x="10" y="10" width="4" height="1" fill="#d3d3d3"/><rect x="14" y="10" width="1" height="1" fill="#4f6b94"/><rect x="0" y="11" width="2" height="1" fill="#8399b9"/><rect x="2" y="11" width="1" height="1" fill="#ffffff"/><rect x="3" y="11" width="11" height="1" fill="#d3d3d3"/><rect x="14" y="11" width="1" height="1" fill="#4f6b94"/><rect x="0" y="12" width="3" height="1" fill="#8399b9"/><rect x="3" y="12" width="1" height="1" fill="#ffffff"/><rect x="4" y="12" width="10" height="1" fill="#d3d3d3"/><rect x="14" y="12" width="1" height="1" fill="#4f6b94"/><rect x="0" y="13" width="4" height="1" fill="#8399b9"/><rect x="4" y="13" width="10" height="1" fill="#d3d3d3"/><rect x="14" y="13" width="1" height="1" fill="#4f6b94"/><rect x="0" y="14" width="15" height="1" fill="#8399b9"/></svg>
<div style="left:252px;top:590px;width:519px;height:13px;background:#cccccc;border-left:1px solid #fff;border-top:1px solid #fff"></div>
<svg style="position:absolute;left:0;top:0" width="995" height="610" shape-rendering="crispEdges"><rect x="431" y="593" width="2" height="2" fill="#fff"/><rect x="432" y="594" width="1" height="1" fill="#b9c4d6"/><rect x="433" y="594" width="1" height="1" fill="#7f95b6"/><rect x="432" y="595" width="1" height="1" fill="#7f95b6"/><rect x="439" y="593" width="2" height="2" fill="#fff"/><rect x="440" y="594" width="1" height="1" fill="#b9c4d6"/><rect x="441" y="594" width="1" height="1" fill="#7f95b6"/><rect x="440" y="595" width="1" height="1" fill="#7f95b6"/><rect x="447" y="593" width="2" height="2" fill="#fff"/><rect x="448" y="594" width="1" height="1" fill="#b9c4d6"/><rect x="449" y="594" width="1" height="1" fill="#7f95b6"/><rect x="448" y="595" width="1" height="1" fill="#7f95b6"/><rect x="455" y="593" width="2" height="2" fill="#fff"/><rect x="456" y="594" width="1" height="1" fill="#b9c4d6"/><rect x="457" y="594" width="1" height="1" fill="#7f95b6"/><rect x="456" y="595" width="1" height="1" fill="#7f95b6"/><rect x="463" y="593" width="2" height="2" fill="#fff"/><rect x="464" y="594" width="1" height="1" fill="#b9c4d6"/><rect x="465" y="594" width="1" height="1" fill="#7f95b6"/><rect x="464" y="595" width="1" height="1" fill="#7f95b6"/><rect x="471" y="593" width="2" height="2" fill="#fff"/><rect x="472" y="594" width="1" height="1" fill="#b9c4d6"/><rect x="473" y="594" width="1" height="1" fill="#7f95b6"/><rect x="472" y="595" width="1" height="1" fill="#7f95b6"/><rect x="479" y="593" width="2" height="2" fill="#fff"/><rect x="480" y="594" width="1" height="1" fill="#b9c4d6"/><rect x="481" y="594" width="1" height="1" fill="#7f95b6"/><rect x="480" y="595" width="1" height="1" fill="#7f95b6"/><rect x="487" y="593" width="2" height="2" fill="#fff"/><rect x="488" y="594" width="1" height="1" fill="#b9c4d6"/><rect x="489" y="594" width="1" height="1" fill="#7f95b6"/><rect x="488" y="595" width="1" height="1" fill="#7f95b6"/><rect x="495" y="593" width="2" height="2" fill="#fff"/><rect x="496" y="594" width="1" height="1" fill="#b9c4d6"/><rect x="497" y="594" width="1" height="1" fill="#7f95b6"/><rect x="496" y="595" width="1" height="1" fill="#7f95b6"/><rect x="503" y="593" width="2" height="2" fill="#fff"/><rect x="504" y="594" width="1" height="1" fill="#b9c4d6"/><rect x="505" y="594" width="1" height="1" fill="#7f95b6"/><rect x="504" y="595" width="1" height="1" fill="#7f95b6"/><rect x="511" y="593" width="2" height="2" fill="#fff"/><rect x="512" y="594" width="1" height="1" fill="#b9c4d6"/><rect x="513" y="594" width="1" height="1" fill="#7f95b6"/><rect x="512" y="595" width="1" height="1" fill="#7f95b6"/><rect x="519" y="593" width="2" height="2" fill="#fff"/><rect x="520" y="594" width="1" height="1" fill="#b9c4d6"/><rect x="521" y="594" width="1" height="1" fill="#7f95b6"/><rect x="520" y="595" width="1" height="1" fill="#7f95b6"/><rect x="527" y="593" width="2" height="2" fill="#fff"/><rect x="528" y="594" width="1" height="1" fill="#b9c4d6"/><rect x="529" y="594" width="1" height="1" fill="#7f95b6"/><rect x="528" y="595" width="1" height="1" fill="#7f95b6"/><rect x="535" y="593" width="2" height="2" fill="#fff"/><rect x="536" y="594" width="1" height="1" fill="#b9c4d6"/><rect x="537" y="594" width="1" height="1" fill="#7f95b6"/><rect x="536" y="595" width="1" height="1" fill="#7f95b6"/><rect x="543" y="593" width="2" height="2" fill="#fff"/><rect x="544" y="594" width="1" height="1" fill="#b9c4d6"/><rect x="545" y="594" width="1" height="1" fill="#7f95b6"/><rect x="544" y="595" width="1" height="1" fill="#7f95b6"/><rect x="551" y="593" width="2" height="2" fill="#fff"/><rect x="552" y="594" width="1" height="1" fill="#b9c4d6"/><rect x="553" y="594" width="1" height="1" fill="#7f95b6"/><rect x="552" y="595" width="1" height="1" fill="#7f95b6"/><rect x="559" y="593" width="2" height="2" fill="#fff"/><rect x="560" y="594" width="1" height="1" fill="#b9c4d6"/><rect x="561" y="594" width="1" height="1" fill="#7f95b6"/><rect x="560" y="595" width="1" height="1" fill="#7f95b6"/><rect x="567" y="593" width="2" height="2" fill="#fff"/><rect x="568" y="594" width="1" height="1" fill="#b9c4d6"/><rect x="569" y="594" width="1" height="1" fill="#7f95b6"/><rect x="568" y="595" width="1" height="1" fill="#7f95b6"/><rect x="575" y="593" width="2" height="2" fill="#fff"/><rect x="576" y="594" width="1" height="1" fill="#b9c4d6"/><rect x="577" y="594" width="1" height="1" fill="#7f95b6"/><rect x="576" y="595" width="1" height="1" fill="#7f95b6"/><rect x="583" y="593" width="2" height="2" fill="#fff"/><rect x="584" y="594" width="1" height="1" fill="#b9c4d6"/><rect x="585" y="594" width="1" height="1" fill="#7f95b6"/><rect x="584" y="595" width="1" height="1" fill="#7f95b6"/><rect x="591" y="593" width="2" height="2" fill="#fff"/><rect x="592" y="594" width="1" height="1" fill="#b9c4d6"/><rect x="593" y="594" width="1" height="1" fill="#7f95b6"/><rect x="592" y="595" width="1" height="1" fill="#7f95b6"/><rect x="427" y="598" width="2" height="2" fill="#fff"/><rect x="428" y="599" width="1" height="1" fill="#b9c4d6"/><rect x="429" y="599" width="1" height="1" fill="#7f95b6"/><rect x="428" y="600" width="1" height="1" fill="#7f95b6"/><rect x="435" y="598" width="2" height="2" fill="#fff"/><rect x="436" y="599" width="1" height="1" fill="#b9c4d6"/><rect x="437" y="599" width="1" height="1" fill="#7f95b6"/><rect x="436" y="600" width="1" height="1" fill="#7f95b6"/><rect x="443" y="598" width="2" height="2" fill="#fff"/><rect x="444" y="599" width="1" height="1" fill="#b9c4d6"/><rect x="445" y="599" width="1" height="1" fill="#7f95b6"/><rect x="444" y="600" width="1" height="1" fill="#7f95b6"/><rect x="451" y="598" width="2" height="2" fill="#fff"/><rect x="452" y="599" width="1" height="1" fill="#b9c4d6"/><rect x="453" y="599" width="1" height="1" fill="#7f95b6"/><rect x="452" y="600" width="1" height="1" fill="#7f95b6"/><rect x="459" y="598" width="2" height="2" fill="#fff"/><rect x="460" y="599" width="1" height="1" fill="#b9c4d6"/><rect x="461" y="599" width="1" height="1" fill="#7f95b6"/><rect x="460" y="600" width="1" height="1" fill="#7f95b6"/><rect x="467" y="598" width="2" height="2" fill="#fff"/><rect x="468" y="599" width="1" height="1" fill="#b9c4d6"/><rect x="469" y="599" width="1" height="1" fill="#7f95b6"/><rect x="468" y="600" width="1" height="1" fill="#7f95b6"/><rect x="475" y="598" width="2" height="2" fill="#fff"/><rect x="476" y="599" width="1" height="1" fill="#b9c4d6"/><rect x="477" y="599" width="1" height="1" fill="#7f95b6"/><rect x="476" y="600" width="1" height="1" fill="#7f95b6"/><rect x="483" y="598" width="2" height="2" fill="#fff"/><rect x="484" y="599" width="1" height="1" fill="#b9c4d6"/><rect x="485" y="599" width="1" height="1" fill="#7f95b6"/><rect x="484" y="600" width="1" height="1" fill="#7f95b6"/><rect x="491" y="598" width="2" height="2" fill="#fff"/><rect x="492" y="599" width="1" height="1" fill="#b9c4d6"/><rect x="493" y="599" width="1" height="1" fill="#7f95b6"/><rect x="492" y="600" width="1" height="1" fill="#7f95b6"/><rect x="499" y="598" width="2" height="2" fill="#fff"/><rect x="500" y="599" width="1" height="1" fill="#b9c4d6"/><rect x="501" y="599" width="1" height="1" fill="#7f95b6"/><rect x="500" y="600" width="1" height="1" fill="#7f95b6"/><rect x="507" y="598" width="2" height="2" fill="#fff"/><rect x="508" y="599" width="1" height="1" fill="#b9c4d6"/><rect x="509" y="599" width="1" height="1" fill="#7f95b6"/><rect x="508" y="600" width="1" height="1" fill="#7f95b6"/><rect x="515" y="598" width="2" height="2" fill="#fff"/><rect x="516" y="599" width="1" height="1" fill="#b9c4d6"/><rect x="517" y="599" width="1" height="1" fill="#7f95b6"/><rect x="516" y="600" width="1" height="1" fill="#7f95b6"/><rect x="523" y="598" width="2" height="2" fill="#fff"/><rect x="524" y="599" width="1" height="1" fill="#b9c4d6"/><rect x="525" y="599" width="1" height="1" fill="#7f95b6"/><rect x="524" y="600" width="1" height="1" fill="#7f95b6"/><rect x="531" y="598" width="2" height="2" fill="#fff"/><rect x="532" y="599" width="1" height="1" fill="#b9c4d6"/><rect x="533" y="599" width="1" height="1" fill="#7f95b6"/><rect x="532" y="600" width="1" height="1" fill="#7f95b6"/><rect x="539" y="598" width="2" height="2" fill="#fff"/><rect x="540" y="599" width="1" height="1" fill="#b9c4d6"/><rect x="541" y="599" width="1" height="1" fill="#7f95b6"/><rect x="540" y="600" width="1" height="1" fill="#7f95b6"/><rect x="547" y="598" width="2" height="2" fill="#fff"/><rect x="548" y="599" width="1" height="1" fill="#b9c4d6"/><rect x="549" y="599" width="1" height="1" fill="#7f95b6"/><rect x="548" y="600" width="1" height="1" fill="#7f95b6"/><rect x="555" y="598" width="2" height="2" fill="#fff"/><rect x="556" y="599" width="1" height="1" fill="#b9c4d6"/><rect x="557" y="599" width="1" height="1" fill="#7f95b6"/><rect x="556" y="600" width="1" height="1" fill="#7f95b6"/><rect x="563" y="598" width="2" height="2" fill="#fff"/><rect x="564" y="599" width="1" height="1" fill="#b9c4d6"/><rect x="565" y="599" width="1" height="1" fill="#7f95b6"/><rect x="564" y="600" width="1" height="1" fill="#7f95b6"/><rect x="571" y="598" width="2" height="2" fill="#fff"/><rect x="572" y="599" width="1" height="1" fill="#b9c4d6"/><rect x="573" y="599" width="1" height="1" fill="#7f95b6"/><rect x="572" y="600" width="1" height="1" fill="#7f95b6"/><rect x="579" y="598" width="2" height="2" fill="#fff"/><rect x="580" y="599" width="1" height="1" fill="#b9c4d6"/><rect x="581" y="599" width="1" height="1" fill="#7f95b6"/><rect x="580" y="600" width="1" height="1" fill="#7f95b6"/><rect x="587" y="598" width="2" height="2" fill="#fff"/><rect x="588" y="599" width="1" height="1" fill="#b9c4d6"/><rect x="589" y="599" width="1" height="1" fill="#7f95b6"/><rect x="588" y="600" width="1" height="1" fill="#7f95b6"/><rect x="595" y="598" width="2" height="2" fill="#fff"/><rect x="596" y="599" width="1" height="1" fill="#b9c4d6"/><rect x="597" y="599" width="1" height="1" fill="#7f95b6"/><rect x="596" y="600" width="1" height="1" fill="#7f95b6"/></svg>
<svg style="position:absolute;left:978px;top:589px" width="15" height="15" shape-rendering="crispEdges"><rect x="0" y="0" width="15" height="1" fill="#8399b9"/><rect x="0" y="1" width="10" height="1" fill="#ffffff"/><rect x="10" y="1" width="5" height="1" fill="#94a3b8"/><rect x="0" y="2" width="1" height="1" fill="#ffffff"/><rect x="1" y="2" width="9" height="1" fill="#d3d3d3"/><rect x="10" y="2" width="1" height="1" fill="#ffffff"/><rect x="11" y="2" width="4" height="1" fill="#94a3b8"/><rect x="0" y="3" width="1" height="1" fill="#ffffff"/><rect x="1" y="3" width="10" height="1" fill="#d3d3d3"/><rect x="11" y="3" width="1" height="1" fill="#ffffff"/><rect x="12" y="3" width="3" height="1" fill="#94a3b8"/><rect x="0" y="4" width="1" height="1" fill="#ffffff"/><rect x="1" y="4" width="4" height="1" fill="#d3d3d3"/><rect x="5" y="4" width="1" height="1" fill="#4a6590"/><rect x="6" y="4" width="6" height="1" fill="#d3d3d3"/><rect x="12" y="4" width="1" height="1" fill="#ffffff"/><rect x="13" y="4" width="2" height="1" fill="#94a3b8"/><rect x="0" y="5" width="1" height="1" fill="#ffffff"/><rect x="1" y="5" width="4" height="1" fill="#d3d3d3"/><rect x="5" y="5" width="2" height="1" fill="#4a6590"/><rect x="7" y="5" width="6" height="1" fill="#d3d3d3"/><rect x="13" y="5" width="1" height="1" fill="#e6e6e6"/><rect x="14" y="5" width="1" height="1" fill="#94a3b8"/><rect x="0" y="6" width="1" height="1" fill="#ffffff"/><rect x="1" y="6" width="4" height="1" fill="#d3d3d3"/><rect x="5" y="6" width="3" height="1" fill="#4a6590"/><rect x="8" y="6" width="5" height="1" fill="#d3d3d3"/><rect x="13" y="6" width="1" height="1" fill="#e6e6e6"/><rect x="14" y="6" width="1" height="1" fill="#94a3b8"/><rect x="0" y="7" width="1" height="1" fill="#ffffff"/><rect x="1" y="7" width="4" height="1" fill="#d3d3d3"/><rect x="5" y="7" width="4" height="1" fill="#4a6590"/><rect x="9" y="7" width="4" height="1" fill="#d3d3d3"/><rect x="13" y="7" width="1" height="1" fill="#e6e6e6"/><rect x="14" y="7" width="1" height="1" fill="#94a3b8"/><rect x="0" y="8" width="1" height="1" fill="#ffffff"/><rect x="1" y="8" width="4" height="1" fill="#d3d3d3"/><rect x="5" y="8" width="3" height="1" fill="#4a6590"/><rect x="8" y="8" width="5" height="1" fill="#d3d3d3"/><rect x="13" y="8" width="1" height="1" fill="#e6e6e6"/><rect x="14" y="8" width="1" height="1" fill="#94a3b8"/><rect x="0" y="9" width="1" height="1" fill="#ffffff"/><rect x="1" y="9" width="4" height="1" fill="#d3d3d3"/><rect x="5" y="9" width="2" height="1" fill="#4a6590"/><rect x="7" y="9" width="6" height="1" fill="#d3d3d3"/><rect x="13" y="9" width="1" height="1" fill="#e6e6e6"/><rect x="14" y="9" width="1" height="1" fill="#94a3b8"/><rect x="0" y="10" width="1" height="1" fill="#ffffff"/><rect x="1" y="10" width="4" height="1" fill="#d3d3d3"/><rect x="5" y="10" width="1" height="1" fill="#4a6590"/><rect x="6" y="10" width="7" height="1" fill="#d3d3d3"/><rect x="13" y="10" width="2" height="1" fill="#94a3b8"/><rect x="0" y="11" width="1" height="1" fill="#ffffff"/><rect x="1" y="11" width="12" height="1" fill="#d3d3d3"/><rect x="13" y="11" width="2" height="1" fill="#94a3b8"/><rect x="0" y="12" width="1" height="1" fill="#ffffff"/><rect x="1" y="12" width="11" height="1" fill="#d3d3d3"/><rect x="12" y="12" width="3" height="1" fill="#94a3b8"/><rect x="0" y="13" width="1" height="1" fill="#ffffff"/><rect x="1" y="13" width="10" height="1" fill="#d3d3d3"/><rect x="11" y="13" width="4" height="1" fill="#94a3b8"/><rect x="0" y="14" width="15" height="1" fill="#8399b9"/></svg>
<div style="left:76px;top:591px;width:151px;height:17px;background:#d8d8d8;border-top:1px solid #fff;border-left:1px solid #fff;border-right:1px solid #5a7396;border-bottom:1px solid #5a7396;border-radius:2px;text-align:center;line-height:17px;letter-spacing:-.12px">Přepočet údajů</div>
<div style="left:74px;top:618px;width:12px;height:12px;background:#fff;border-top:1px solid #243148;border-left:1px solid #243148;border-right:1px solid #fff;border-bottom:1px solid #fff;box-shadow:inset -1px -1px 0 #d0d0d0"></div>
<span style="left:92px;top:613px;font-weight:bold;line-height:15px;letter-spacing:.22px">Pouze ruční vstup údajů</span>
<span style="left:92px;top:628px;font-weight:bold;line-height:15px;letter-spacing:.275px">(nebřebírat údaje z úč.)</span>
<svg style="position:absolute;left:2px;top:30px" width="11" height="11" shape-rendering="crispEdges"><rect x="3" y="0" width="5" height="1" fill="#1e2a40"/><rect x="1" y="1" width="2" height="1" fill="#1e2a40"/><rect x="3" y="1" width="5" height="1" fill="#d7d7d7"/><rect x="8" y="1" width="1" height="1" fill="#1e2a40"/><rect x="9" y="1" width="1" height="1" fill="#ffffff"/><rect x="1" y="2" width="1" height="1" fill="#1e2a40"/><rect x="2" y="2" width="6" height="1" fill="#8a9db8"/><rect x="8" y="2" width="1" height="1" fill="#d7d7d7"/><rect x="9" y="2" width="1" height="1" fill="#ffffff"/><rect x="0" y="3" width="1" height="1" fill="#1e2a40"/><rect x="1" y="3" width="1" height="1" fill="#d7d7d7"/><rect x="2" y="3" width="6" height="1" fill="#8a9db8"/><rect x="8" y="3" width="2" height="1" fill="#d7d7d7"/><rect x="10" y="3" width="1" height="1" fill="#ffffff"/><rect x="0" y="4" width="1" height="1" fill="#1e2a40"/><rect x="1" y="4" width="1" height="1" fill="#d7d7d7"/><rect x="2" y="4" width="6" height="1" fill="#8a9db8"/><rect x="8" y="4" width="2" height="1" fill="#d7d7d7"/><rect x="10" y="4" width="1" height="1" fill="#ffffff"/><rect x="0" y="5" width="1" height="1" fill="#1e2a40"/><rect x="1" y="5" width="1" height="1" fill="#d7d7d7"/><rect x="2" y="5" width="6" height="1" fill="#8a9db8"/><rect x="8" y="5" width="2" height="1" fill="#d7d7d7"/><rect x="10" y="5" width="1" height="1" fill="#ffffff"/><rect x="0" y="6" width="1" height="1" fill="#1e2a40"/><rect x="1" y="6" width="1" height="1" fill="#d7d7d7"/><rect x="2" y="6" width="6" height="1" fill="#8a9db8"/><rect x="8" y="6" width="2" height="1" fill="#d7d7d7"/><rect x="10" y="6" width="1" height="1" fill="#ffffff"/><rect x="0" y="7" width="1" height="1" fill="#1e2a40"/><rect x="1" y="7" width="1" height="1" fill="#d7d7d7"/><rect x="2" y="7" width="6" height="1" fill="#8a9db8"/><rect x="8" y="7" width="2" height="1" fill="#d7d7d7"/><rect x="10" y="7" width="1" height="1" fill="#ffffff"/><rect x="1" y="8" width="1" height="1" fill="#1e2a40"/><rect x="2" y="8" width="7" height="1" fill="#d7d7d7"/><rect x="9" y="8" width="1" height="1" fill="#ffffff"/><rect x="1" y="9" width="1" height="1" fill="#ffffff"/><rect x="2" y="9" width="7" height="1" fill="#d7d7d7"/><rect x="9" y="9" width="1" height="1" fill="#ffffff"/><rect x="3" y="10" width="5" height="1" fill="#ffffff"/></svg>
<svg style="position:absolute;left:0px;top:0px" width="16" height="18" shape-rendering="crispEdges"><rect x="0" y="0" width="16" height="1" fill="#0000ff"/><rect x="0" y="1" width="15" height="1" fill="#fcfcf2"/><rect x="15" y="1" width="1" height="1" fill="#0000ff"/><rect x="0" y="2" width="5" height="1" fill="#fcfcf2"/><rect x="5" y="2" width="2" height="1" fill="#0000ff"/><rect x="7" y="2" width="8" height="1" fill="#fcfcf2"/><rect x="15" y="2" width="1" height="1" fill="#0000ff"/><rect x="0" y="3" width="5" height="1" fill="#fcfcf2"/><rect x="5" y="3" width="2" height="1" fill="#0000ff"/><rect x="7" y="3" width="8" height="1" fill="#fcfcf2"/><rect x="15" y="3" width="1" height="1" fill="#0000ff"/><rect x="0" y="4" width="1" height="1" fill="#fcfcf2"/><rect x="1" y="4" width="5" height="1" fill="#0000ff"/><rect x="6" y="4" width="1" height="1" fill="#fcfcf2"/><rect x="7" y="4" width="6" height="1" fill="#0000ff"/><rect x="13" y="4" width="2" height="1" fill="#fcfcf2"/><rect x="15" y="4" width="1" height="1" fill="#0000ff"/><rect x="0" y="5" width="1" height="1" fill="#fcfcf2"/><rect x="1" y="5" width="5" height="1" fill="#0000ff"/><rect x="6" y="5" width="1" height="1" fill="#fcfcf2"/><rect x="7" y="5" width="6" height="1" fill="#0000ff"/><rect x="13" y="5" width="2" height="1" fill="#fcfcf2"/><rect x="15" y="5" width="1" height="1" fill="#0000ff"/><rect x="0" y="6" width="3" height="1" fill="#fcfcf2"/><rect x="3" y="6" width="2" height="1" fill="#0000ff"/><rect x="5" y="6" width="1" height="1" fill="#fcfcf2"/><rect x="6" y="6" width="3" height="1" fill="#0000ff"/><rect x="9" y="6" width="6" height="1" fill="#fcfcf2"/><rect x="15" y="6" width="1" height="1" fill="#0000ff"/><rect x="0" y="7" width="3" height="1" fill="#fcfcf2"/><rect x="3" y="7" width="2" height="1" fill="#0000ff"/><rect x="5" y="7" width="1" height="1" fill="#fcfcf2"/><rect x="6" y="7" width="2" height="1" fill="#0000ff"/><rect x="8" y="7" width="7" height="1" fill="#fcfcf2"/><rect x="15" y="7" width="1" height="1" fill="#0000ff"/><rect x="0" y="8" width="2" height="1" fill="#fcfcf2"/><rect x="2" y="8" width="2" height="1" fill="#0000ff"/><rect x="4" y="8" width="1" height="1" fill="#fcfcf2"/><rect x="5" y="8" width="7" height="1" fill="#0000ff"/><rect x="12" y="8" width="3" height="1" fill="#fcfcf2"/><rect x="15" y="8" width="1" height="1" fill="#0000ff"/><rect x="0" y="9" width="2" height="1" fill="#fcfcf2"/><rect x="2" y="9" width="2" height="1" fill="#0000ff"/><rect x="4" y="9" width="1" height="1" fill="#fcfcf2"/><rect x="5" y="9" width="7" height="1" fill="#0000ff"/><rect x="12" y="9" width="3" height="1" fill="#fcfcf2"/><rect x="15" y="9" width="1" height="1" fill="#0000ff"/><rect x="0" y="10" width="1" height="1" fill="#f4f4f0"/><rect x="1" y="10" width="2" height="1" fill="#0000ff"/><rect x="3" y="10" width="2" height="1" fill="#f4f4f0"/><rect x="5" y="10" width="2" height="1" fill="#0000ff"/><rect x="7" y="10" width="8" height="1" fill="#f4f4f0"/><rect x="15" y="10" width="1" height="1" fill="#0000ff"/><rect x="0" y="11" width="1" height="1" fill="#f4f4f0"/><rect x="1" y="11" width="2" height="1" fill="#0000ff"/><rect x="3" y="11" width="1" height="1" fill="#f4f4f0"/><rect x="4" y="11" width="3" height="1" fill="#0000ff"/><rect x="7" y="11" width="8" height="1" fill="#f4f4f0"/><rect x="15" y="11" width="1" height="1" fill="#0000ff"/><rect x="0" y="12" width="4" height="1" fill="#f4f4f0"/><rect x="4" y="12" width="2" height="1" fill="#0000ff"/><rect x="6" y="12" width="9" height="1" fill="#f4f4f0"/><rect x="15" y="12" width="1" height="1" fill="#0000ff"/><rect x="0" y="13" width="3" height="1" fill="#f4f4f0"/><rect x="3" y="13" width="3" height="1" fill="#0000ff"/><rect x="6" y="13" width="9" height="1" fill="#f4f4f0"/><rect x="15" y="13" width="1" height="1" fill="#0000ff"/><rect x="0" y="14" width="3" height="1" fill="#f4f4f0"/><rect x="3" y="14" width="3" height="1" fill="#0000ff"/><rect x="6" y="14" width="9" height="1" fill="#f4f4f0"/><rect x="15" y="14" width="1" height="1" fill="#0000ff"/><rect x="0" y="15" width="15" height="1" fill="#f4f4f0"/><rect x="15" y="15" width="1" height="1" fill="#0000ff"/><rect x="0" y="16" width="15" height="1" fill="#f4f4f0"/><rect x="15" y="16" width="1" height="1" fill="#0000ff"/><rect x="0" y="17" width="16" height="1" fill="#0000ff"/></svg>
</div>
</body></html>
